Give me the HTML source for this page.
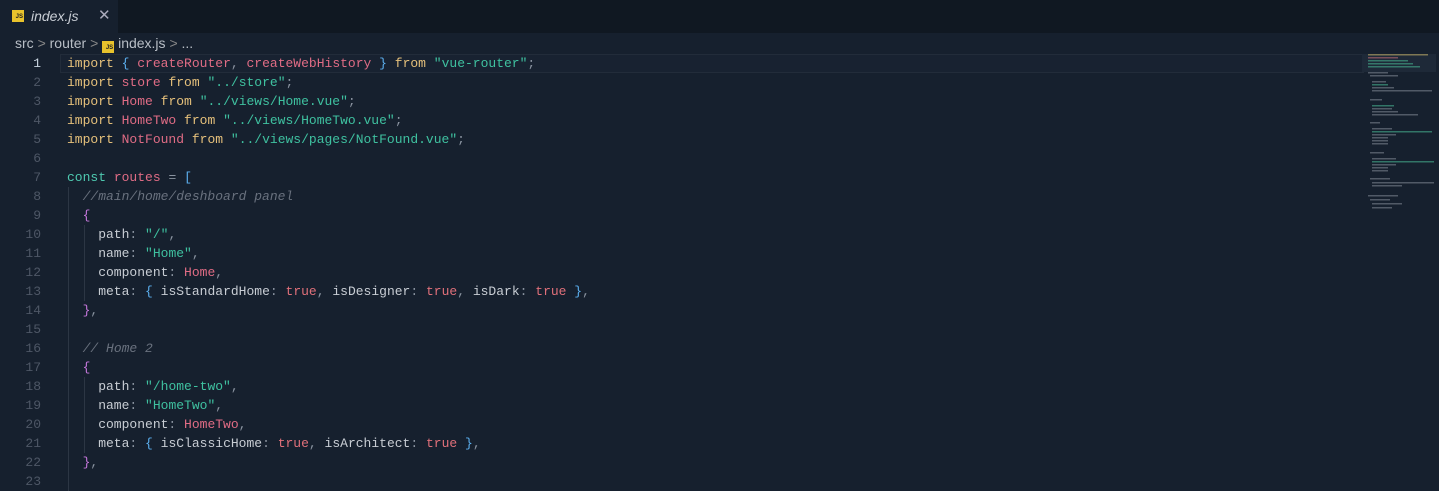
<!DOCTYPE html>
<html><head><meta charset="utf-8"><style>
body{margin:0;width:1439px;height:491px;background:#16202e;overflow:hidden;font-family:"Liberation Sans",sans-serif;position:relative}
.tabbar{position:absolute;left:0;top:0;width:1439px;height:33px;background:#101822}
.tab{position:absolute;left:0;top:0;width:118px;height:33px;background:#16202e;color:#c8cdd4;font-size:14px}
.js{display:inline-block;background:#e8c22c;color:#222;font-size:6px;font-weight:bold;width:12px;height:12px;line-height:15px;text-align:right;box-sizing:border-box;padding-right:1px;position:absolute}
.crumb{position:absolute;top:35px;left:15px;font-size:14px;color:#b8bec6}
.ln{position:absolute;left:0;width:41px;text-align:right;color:#4e5766;font-family:"Liberation Mono",monospace;font-size:13px}
.code{position:absolute;left:67px;top:54px;font-family:"Liberation Mono",monospace;font-size:13px;line-height:19px;color:#c8cdd4;white-space:pre}
.k{color:#e5c07b}.v{color:#e06c85}.s{color:#3fc1a0}.c{color:#4ec9b0}.b{color:#5cb0f0}.p{color:#c678dd}.cm{color:#69717e;font-style:italic}.t{color:#e0707a}.o{color:#8a93a0}
.hl{position:absolute;left:60px;top:54px;width:1302px;height:17px;border:1px solid #222c3a;background:#182231}
.guide{position:absolute;width:1px;background:#2c3644}
</style></head><body>
<div class="tabbar"><div class="tab"><span class="js" style="left:12px;top:10px">JS</span><span style="position:absolute;left:31px;top:8px;font-style:italic">index.js</span><span style="position:absolute;left:98px;top:6px;font-size:15px;color:#aab">✕</span></div></div>
<div class="crumb">src <span style="color:#888">&gt;</span> router <span style="color:#888">&gt;</span> <span class="js" style="position:relative;display:inline-block;top:1px">JS</span> index.js <span style="color:#888">&gt;</span> ...</div>
<div class="hl"></div>
<div class="guide" style="left:68px;top:187px;height:304px"></div>
<div class="guide" style="left:84px;top:225px;height:76px"></div>
<div class="guide" style="left:84px;top:377px;height:76px"></div>
<div style="position:absolute;top:54px;left:0;line-height:19px">
<div class="ln" style="position:static;color:#c8d4e0">1</div><div class="ln" style="position:static">2</div><div class="ln" style="position:static">3</div><div class="ln" style="position:static">4</div><div class="ln" style="position:static">5</div><div class="ln" style="position:static">6</div><div class="ln" style="position:static">7</div><div class="ln" style="position:static">8</div><div class="ln" style="position:static">9</div><div class="ln" style="position:static">10</div><div class="ln" style="position:static">11</div><div class="ln" style="position:static">12</div><div class="ln" style="position:static">13</div><div class="ln" style="position:static">14</div><div class="ln" style="position:static">15</div><div class="ln" style="position:static">16</div><div class="ln" style="position:static">17</div><div class="ln" style="position:static">18</div><div class="ln" style="position:static">19</div><div class="ln" style="position:static">20</div><div class="ln" style="position:static">21</div><div class="ln" style="position:static">22</div><div class="ln" style="position:static">23</div>
</div>
<div class="code"><span class="k">import</span> <span class="b">{</span> <span class="v">createRouter</span><span class="o">,</span> <span class="v">createWebHistory</span> <span class="b">}</span> <span class="k">from</span> <span class="s">"vue-router"</span><span class="o">;</span>
<span class="k">import</span> <span class="v">store</span> <span class="k">from</span> <span class="s">"../store"</span><span class="o">;</span>
<span class="k">import</span> <span class="v">Home</span> <span class="k">from</span> <span class="s">"../views/Home.vue"</span><span class="o">;</span>
<span class="k">import</span> <span class="v">HomeTwo</span> <span class="k">from</span> <span class="s">"../views/HomeTwo.vue"</span><span class="o">;</span>
<span class="k">import</span> <span class="v">NotFound</span> <span class="k">from</span> <span class="s">"../views/pages/NotFound.vue"</span><span class="o">;</span>

<span class="c">const</span> <span class="v">routes</span> <span class="o">=</span> <span class="b">[</span>
  <span class="cm">//main/home/deshboard panel</span>
  <span class="p">{</span>
    path<span class="o">:</span> <span class="s">"/"</span><span class="o">,</span>
    name<span class="o">:</span> <span class="s">"Home"</span><span class="o">,</span>
    component<span class="o">:</span> <span class="v">Home</span><span class="o">,</span>
    meta<span class="o">:</span> <span class="b">{</span> isStandardHome<span class="o">:</span> <span class="t">true</span><span class="o">,</span> isDesigner<span class="o">:</span> <span class="t">true</span><span class="o">,</span> isDark<span class="o">:</span> <span class="t">true</span> <span class="b">}</span><span class="o">,</span>
  <span class="p">}</span><span class="o">,</span>

  <span class="cm">// Home 2</span>
  <span class="p">{</span>
    path<span class="o">:</span> <span class="s">"/home-two"</span><span class="o">,</span>
    name<span class="o">:</span> <span class="s">"HomeTwo"</span><span class="o">,</span>
    component<span class="o">:</span> <span class="v">HomeTwo</span><span class="o">,</span>
    meta<span class="o">:</span> <span class="b">{</span> isClassicHome<span class="o">:</span> <span class="t">true</span><span class="o">,</span> isArchitect<span class="o">:</span> <span class="t">true</span> <span class="b">}</span><span class="o">,</span>
  <span class="p">}</span><span class="o">,</span>
</div>
<div style="position:absolute;left:1362px;top:54px;width:74px;height:18px;background:#1e2938"></div>
<svg style="position:absolute;left:1368px;top:52px" width="70" height="160">
<g fill="#6a7380" opacity="0.7">
<rect x="0" y="2" width="60" height="1.5" fill="#a89a60"/><rect x="0" y="5" width="30" height="1.5" fill="#a0606a"/><rect x="0" y="8" width="40" height="1.5" fill="#3f9a80"/><rect x="0" y="11" width="45" height="1.5" fill="#3f9a80"/><rect x="0" y="14" width="52" height="1.5" fill="#3f9a80"/>
<rect x="0" y="20" width="20" height="1.5"/><rect x="2" y="23" width="28" height="1.5"/><rect x="4" y="29" width="14" height="1.5"/><rect x="4" y="32" width="16" height="1.5" fill="#3f9a80"/><rect x="4" y="35" width="22" height="1.5"/><rect x="4" y="38" width="60" height="1.5"/>
<rect x="2" y="47" width="12" height="1.5"/><rect x="4" y="53" width="22" height="1.5" fill="#3f9a80"/><rect x="4" y="56" width="20" height="1.5"/><rect x="4" y="59" width="26" height="1.5"/><rect x="4" y="62" width="46" height="1.5"/>
<rect x="2" y="70" width="10" height="1.5"/><rect x="4" y="76" width="20" height="1.5"/><rect x="4" y="79" width="60" height="1.5" fill="#3f9a80"/><rect x="4" y="82" width="24" height="1.5"/><rect x="4" y="85" width="16" height="1.5"/><rect x="4" y="88" width="16" height="1.5"/><rect x="4" y="91" width="16" height="1.5"/>
<rect x="2" y="100" width="14" height="1.5"/><rect x="4" y="106" width="24" height="1.5"/><rect x="4" y="109" width="62" height="1.5" fill="#3f9a80"/><rect x="4" y="112" width="24" height="1.5"/><rect x="4" y="115" width="16" height="1.5"/><rect x="4" y="118" width="16" height="1.5"/>
<rect x="2" y="126" width="20" height="1.5"/><rect x="4" y="130" width="62" height="1.5"/><rect x="4" y="133" width="30" height="1.5"/><rect x="0" y="143" width="30" height="1.5"/><rect x="2" y="147" width="20" height="1.5"/><rect x="4" y="151" width="30" height="1.5"/><rect x="4" y="155" width="20" height="1.5"/>
</g></svg>
</body></html>
